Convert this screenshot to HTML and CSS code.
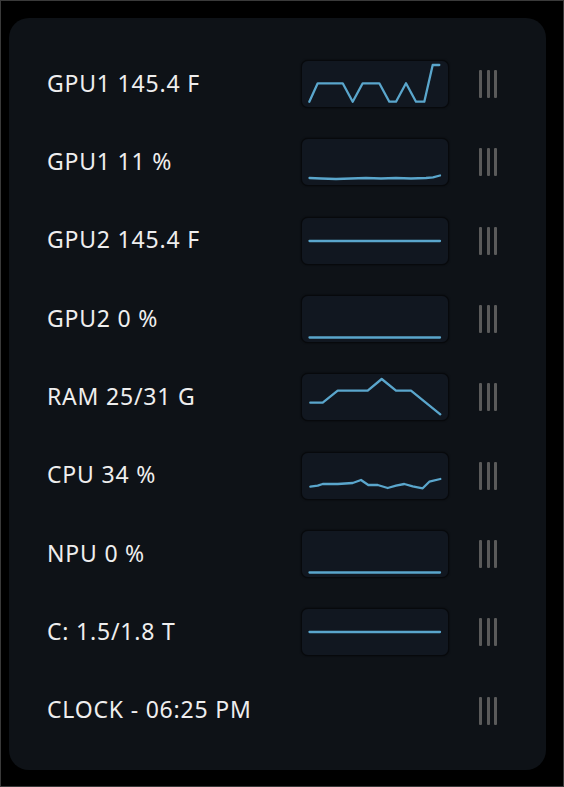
FILE: index.html
```html
<!DOCTYPE html>
<html>
<head>
<meta charset="utf-8">
<link rel="stylesheet" href="styles.css">
</head>
<body>
<div class="frame">
  <div class="panel">
    <div class="row">
      <div class="label">GPU1 145.4 F</div>
      <div class="spark"><svg viewBox="0 0 148 48"><polyline points="8.3,41.7 16.7,23.3 41.7,23.3 51.7,41.7 61.7,23.3 78.3,23.3 88.3,41.7 95,41.7 105,23.3 115,41.7 123.3,41.7 131.7,5 138.3,5"/></svg></div>
      <div class="handle"><span></span><span></span><span></span></div>
    </div>
    <div class="row">
      <div class="label">GPU1 11 %</div>
      <div class="spark"><svg viewBox="0 0 148 48"><polyline points="8.5,40 20,40.5 35,41 50,40.5 65,40 80,40.5 95,40 110,40.5 125,40 132,39.3 139,37.5"/></svg></div>
      <div class="handle"><span></span><span></span><span></span></div>
    </div>
    <div class="row">
      <div class="label">GPU2 145.4 F</div>
      <div class="spark"><svg viewBox="0 0 148 48"><polyline points="8.5,24 139,24"/></svg></div>
      <div class="handle"><span></span><span></span><span></span></div>
    </div>
    <div class="row">
      <div class="label">GPU2 0 %</div>
      <div class="spark"><svg viewBox="0 0 148 48"><polyline points="8.5,42.5 139,42.5"/></svg></div>
      <div class="handle"><span></span><span></span><span></span></div>
    </div>
    <div class="row">
      <div class="label">RAM 25/31 G</div>
      <div class="spark"><svg viewBox="0 0 148 48"><polyline points="9.3,29.7 21.7,29.7 36.7,17.7 66.7,17.7 80.7,6 95,17.7 110,17.7 139.3,41.3"/></svg></div>
      <div class="handle"><span></span><span></span><span></span></div>
    </div>
    <div class="row">
      <div class="label">CPU 34 %</div>
      <div class="spark"><svg viewBox="0 0 148 48"><polyline points="9.3,34.7 16.7,33.7 21.7,32 36.7,32 51.7,31 60,28 67.3,33 76.7,33 86.7,36 95,33.7 103.3,32 111.7,34.3 121.7,36.3 128.3,29.7 139.3,27"/></svg></div>
      <div class="handle"><span></span><span></span><span></span></div>
    </div>
    <div class="row">
      <div class="label">NPU 0 %</div>
      <div class="spark"><svg viewBox="0 0 148 48"><polyline points="8.5,42.5 139,42.5"/></svg></div>
      <div class="handle"><span></span><span></span><span></span></div>
    </div>
    <div class="row">
      <div class="label">C: 1.5/1.8 T</div>
      <div class="spark"><svg viewBox="0 0 148 48"><polyline points="8.5,24 139,24"/></svg></div>
      <div class="handle"><span></span><span></span><span></span></div>
    </div>
    <div class="row">
      <div class="label">CLOCK - 06:25 PM</div>
      <div class="nospark"></div>
      <div class="handle"><span></span><span></span><span></span></div>
    </div>
  </div>
</div>
</body>
</html>
```

FILE: styles.css
```css
html, body {
  margin: 0;
  padding: 0;
  background: #000;
}
.frame {
  box-sizing: border-box;
  width: 564px;
  height: 787px;
  border: 1px solid #3a3a3a;
  background: #000;
  padding: 17px 0 0 8px;
}
.panel {
  box-sizing: border-box;
  width: 537px;
  height: 752px;
  background: #0e1217;
  border-radius: 20px;
  padding: 27px 47px 0 38px;
  display: flex;
  flex-direction: column;
}
.row {
  height: 78.33px;
  display: grid;
  grid-template-columns: 1fr 148px 20px;
  column-gap: 30px;
  align-items: center;
}
.label {
  font-family: "Noto Sans", "Open Sans", sans-serif;
  font-size: 23px;
  font-weight: 400;
  line-height: 30px;
  color: #eeeeee;
  letter-spacing: 0.8px;
  padding-bottom: 3px;
  white-space: nowrap;
}
.spark {
  box-sizing: border-box;
  width: 148px;
  height: 48px;
  background: #111720;
  border: 1px solid #07090c;
  border-radius: 7px;
  box-shadow: 0 0 2px rgba(0,0,0,0.8);
  overflow: hidden;
}
.spark svg {
  display: block;
  width: 148px;
  height: 48px;
  margin: -1px;
}
.spark polyline {
  fill: none;
  stroke: #5aa6cc;
  stroke-width: 2.3;
  stroke-linejoin: round;
  stroke-linecap: round;
}
.nospark {
  height: 48px;
}
.handle {
  display: flex;
  gap: 4.5px;
  height: 28px;
  align-items: stretch;
  justify-content: flex-start;
}
.handle span {
  width: 3px;
  background: #5a5a5a;
  border-radius: 1px;
}
```
